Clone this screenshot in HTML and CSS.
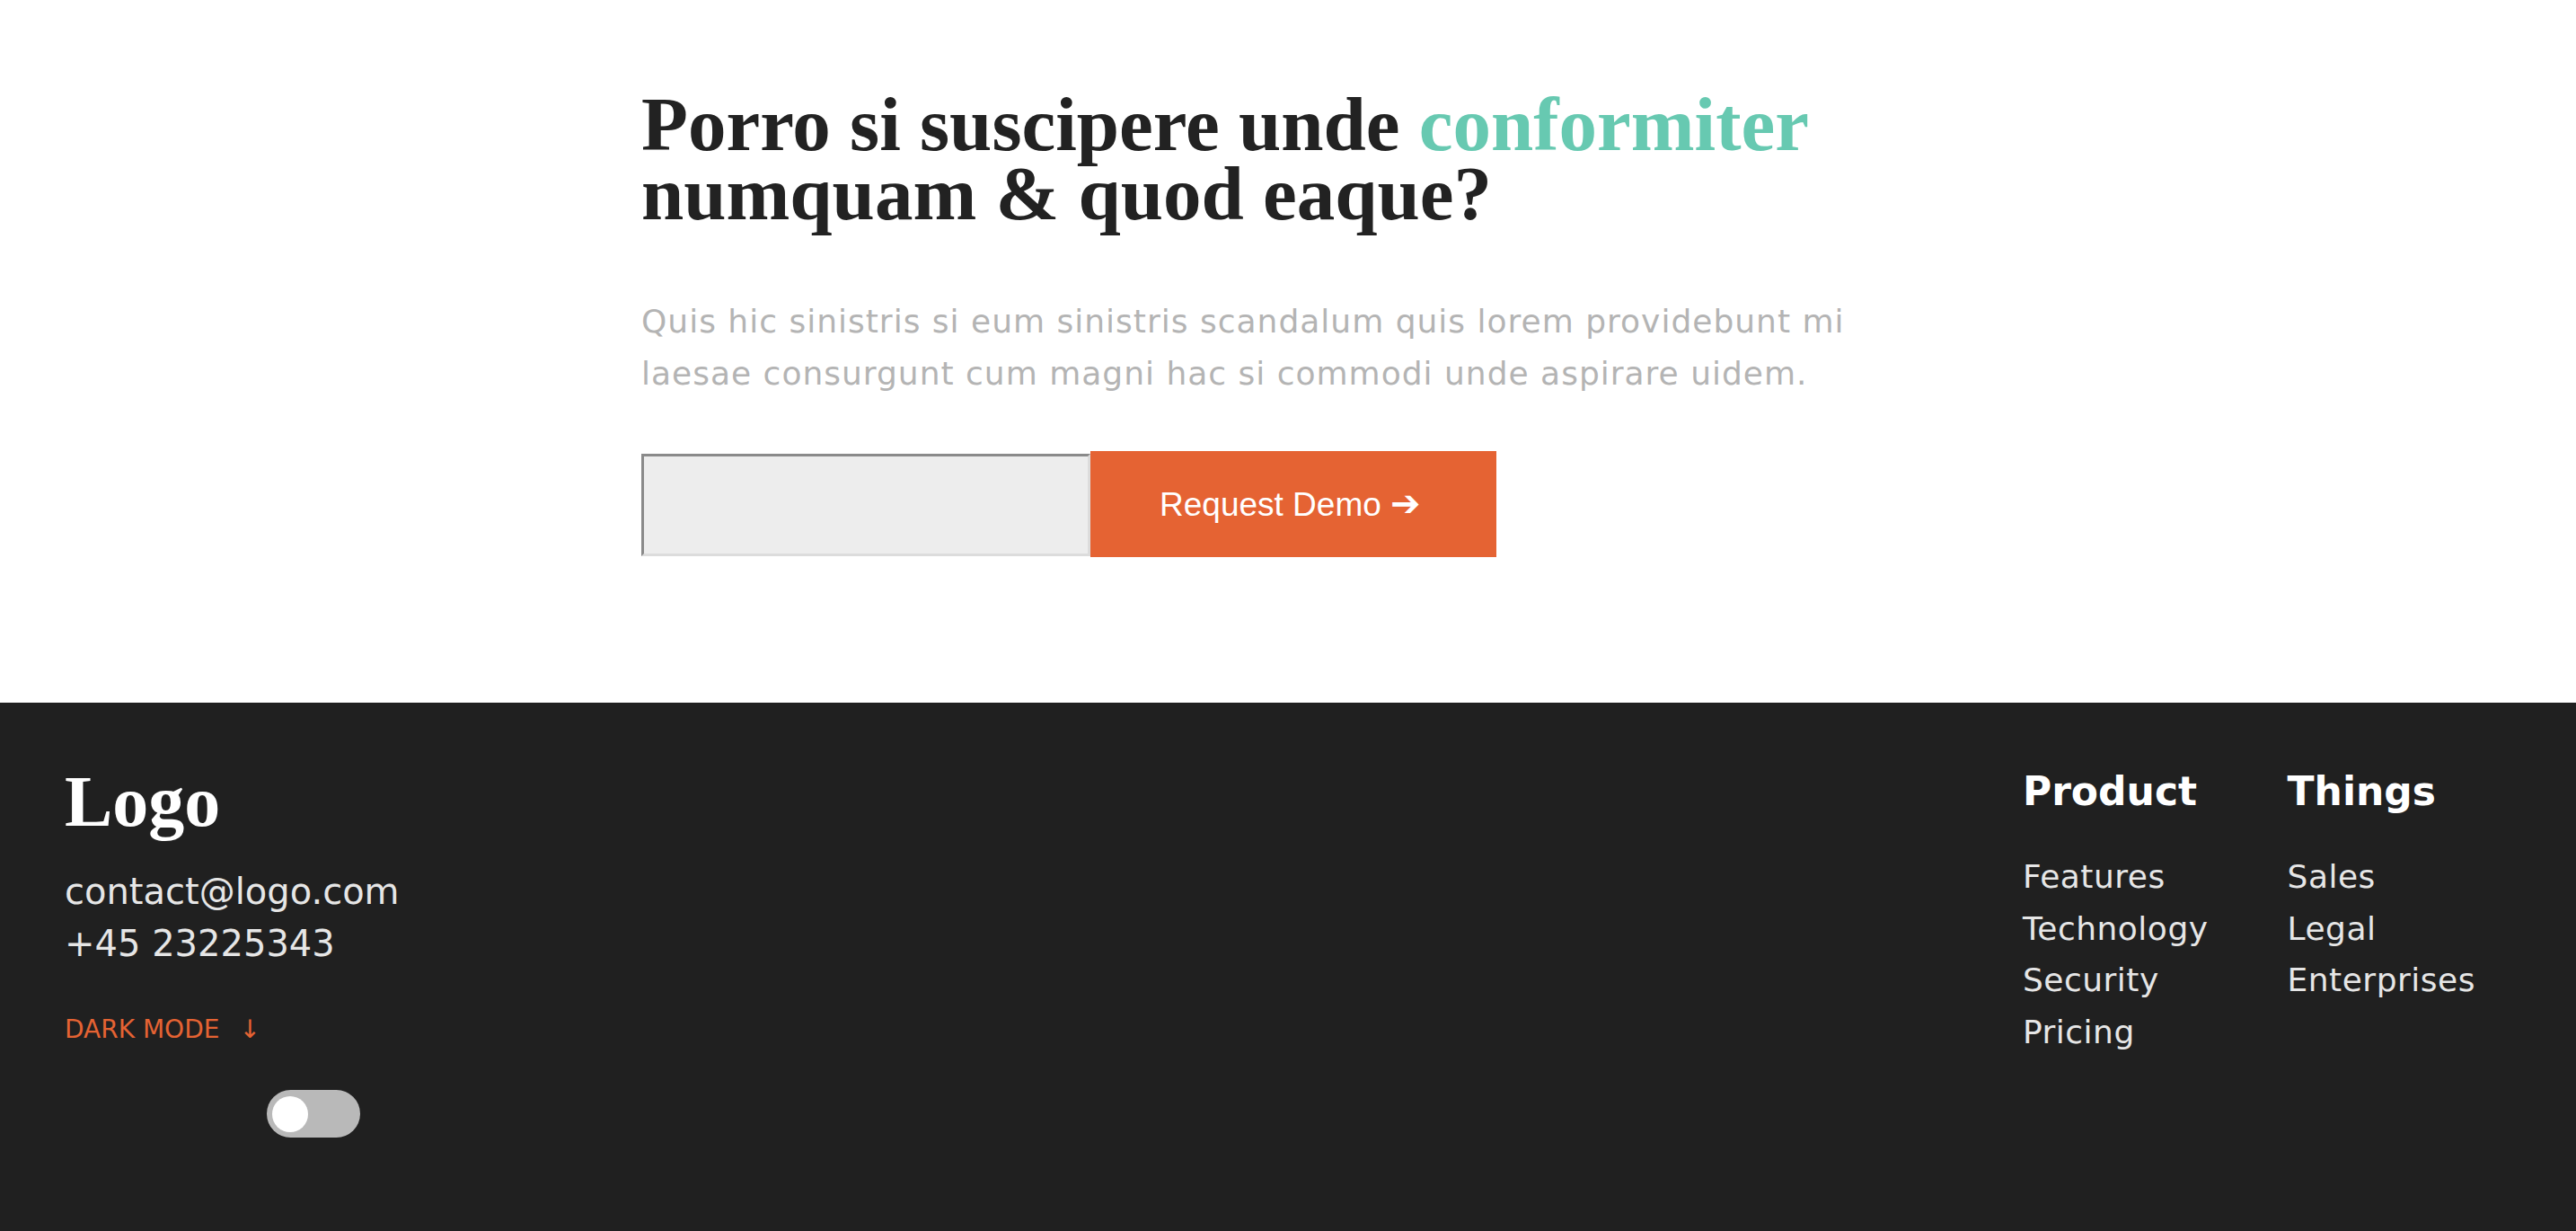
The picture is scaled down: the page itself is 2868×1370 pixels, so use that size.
FILE: index.html
```html
<!DOCTYPE html>
<html lang="en">
<head>
<meta charset="utf-8">
<title>Request Demo</title>
<link rel="stylesheet" href="styles.css">
</head>
<body>
<section class="cta">
  <div class="container">
    <h1 class="cta-title">Porro si suscipere unde <span class="accent">conformiter</span> numquam &amp; quod eaque?</h1>
    <p class="cta-text">Quis hic sinistris si eum sinistris scandalum quis lorem providebunt mi laesae consurgunt cum magni hac si commodi unde aspirare uidem.</p>
    <form class="cta-form">
      <input class="cta-input" type="email" aria-label="Email">
      <button class="cta-button" type="button">Request Demo <span class="btn-arrow">➔</span></button>
    </form>
  </div>
</section>
<footer class="footer">
  <div class="brand">
    <div class="logo">Logo</div>
    <div class="contact">
      <div>contact@logo.com</div>
      <div>+45 23225343</div>
    </div>
    <div class="mode">DARK MODE<span class="mode-arrow">↓</span></div>
    <div class="toggle"><span class="knob"></span></div>
  </div>
  <nav class="nav">
    <div class="nav-col nav-col-first">
      <h3 class="nav-title">Product</h3>
      <ul class="nav-list">
        <li>Features</li>
        <li>Technology</li>
        <li>Security</li>
        <li>Pricing</li>
      </ul>
    </div>
    <div class="nav-col">
      <h3 class="nav-title">Things</h3>
      <ul class="nav-list">
        <li>Sales</li>
        <li>Legal</li>
        <li>Enterprises</li>
      </ul>
    </div>
  </nav>
</footer>
</body>
</html>
```

FILE: styles.css
```css
html, body {
  margin: 0;
  padding: 0;
  background: #ffffff;
}

body {
  font-family: "DejaVu Sans", "Open Sans", sans-serif;
}

.cta {
  padding: 100px 0 162px;
  background: #ffffff;
}

.container {
  width: 1440px;
  margin: 0 auto;
}

.cta-title {
  margin: 0;
  font-family: "Liberation Serif", "DejaVu Serif", serif;
  font-weight: 700;
  font-size: 85px;
  line-height: 77px;
  color: #222222;
}

.accent {
  color: #67c9b1;
}

.cta-text {
  margin: 75px 0 0;
  font-size: 36px;
  line-height: 57.6px;
  letter-spacing: 1px;
  color: #b4b4b4;
}

.cta-form {
  display: flex;
  align-items: flex-start;
  margin-top: 58px;
}

.cta-input {
  box-sizing: border-box;
  width: 500px;
  height: 114px;
  margin: 3px 0 0;
  padding: 0 20px;
  background: #ededed;
  border-style: solid;
  border-width: 3px;
  border-color: #8a8a8a #dcdcdc #dcdcdc #8a8a8a;
  outline: none;
  font-size: 32px;
}

.cta-button {
  margin: 0;
  padding: 37px 84px 37px 77px;
  border: none;
  background: #e56333;
  color: #ffffff;
  font-family: "Liberation Sans", Arial, sans-serif;
  font-size: 37px;
  line-height: 42px;
  cursor: pointer;
}

.btn-arrow {
  font-family: "DejaVu Sans", sans-serif;
  font-weight: 700;
  font-size: 40px;
}

.footer {
  display: flex;
  justify-content: space-between;
  align-items: flex-start;
  padding: 64px 72px 120px;
  background: #202020;
}

.brand {
  display: flex;
  flex-direction: column;
  align-items: flex-start;
}

.logo {
  font-family: "Liberation Serif", "DejaVu Serif", serif;
  font-weight: 700;
  font-size: 80px;
  line-height: 92px;
  color: #ffffff;
}

.contact {
  margin-top: 26px;
  font-size: 40px;
  line-height: 57.6px;
  color: #e6e6e6;
}

.mode {
  margin-top: 47px;
  font-size: 28px;
  line-height: 40px;
  color: #e56333;
}

.mode-arrow {
  margin-left: 22px;
}

.toggle {
  box-sizing: border-box;
  display: flex;
  align-items: center;
  width: 104px;
  height: 53px;
  margin: 47px 0 0 225px;
  padding-left: 6px;
  border-radius: 27px;
  background: #b9b9b9;
}

.knob {
  width: 40px;
  height: 40px;
  border-radius: 50%;
  background: #ffffff;
}

.nav {
  display: flex;
  gap: 40px;
}

.nav-col {
  padding-right: 40px;
}

.nav-col-first {
  padding-right: 48px;
}

.nav-title {
  margin: 7px 0 0;
  font-size: 44px;
  line-height: 56px;
  font-weight: 700;
  color: #ffffff;
}

.nav-list {
  margin: 38px 0 0;
  padding: 0;
  list-style: none;
  font-size: 36px;
  line-height: 57.6px;
  letter-spacing: 0.5px;
  color: #e6e6e6;
}
```
